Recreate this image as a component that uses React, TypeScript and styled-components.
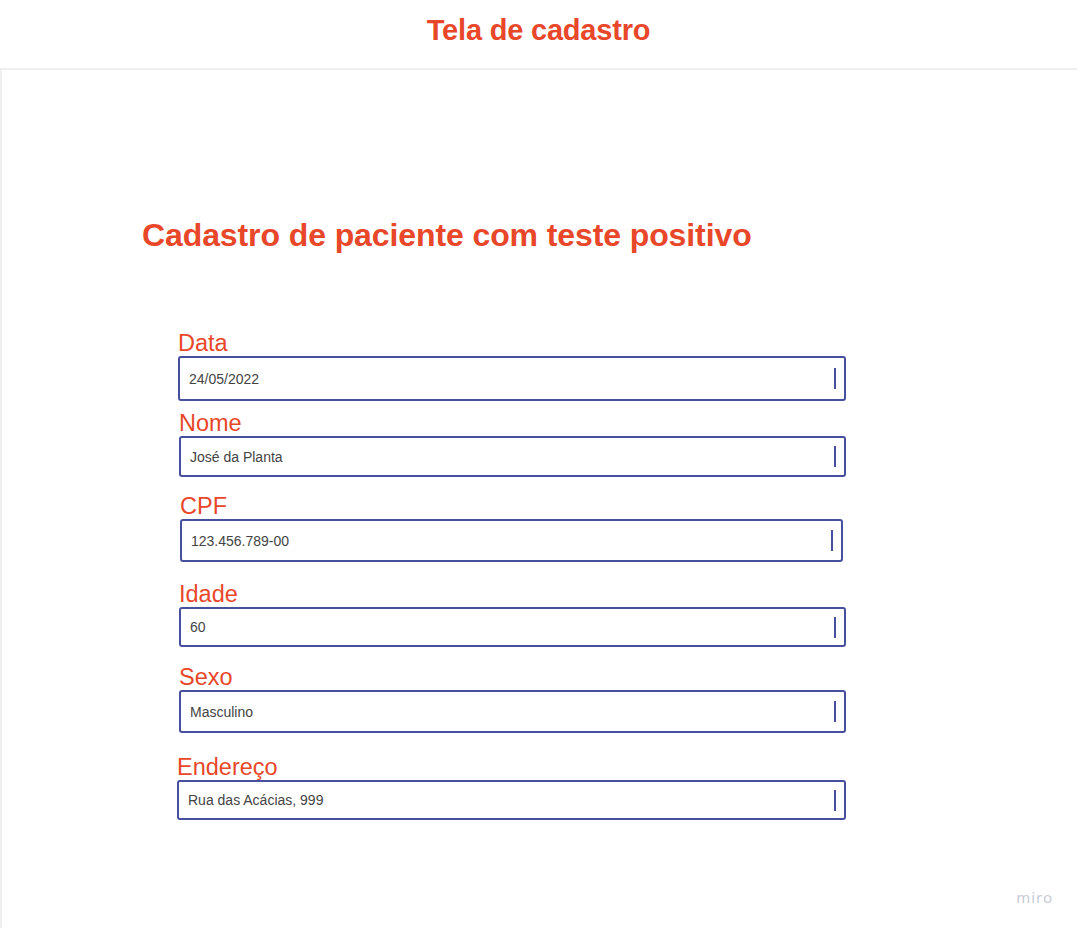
import React from "react";
import styled, { createGlobalStyle } from "styled-components";

const Global = createGlobalStyle`
  html, body { margin: 0; padding: 0; background: #ffffff; }
  body { font-family: "Liberation Sans", Arial, sans-serif; }
`;

const Page = styled.div`
  width: 1077px;
  height: 928px;
  display: flex;
  flex-direction: column;
  overflow: hidden;
  background: #fff;
`;

const TopBar = styled.header`
  flex: none;
  height: 70px;
  display: flex;
  justify-content: center;
  align-items: flex-start;
  border-bottom: 2px solid #efefef;
  box-sizing: border-box;
`;

const TopTitle = styled.h1`
  margin: 13px 0 0 0;
  font-size: 29px;
  line-height: 34px;
  font-weight: 700;
  color: #e8472a;
  letter-spacing: -0.2px;
`;

const Canvas = styled.main`
  flex: 1;
  border-left: 2px solid #efefef;
  position: relative;
  padding: 147px 0 0 140px;
`;

const Heading = styled.h2`
  margin: 0 0 78px 0;
  font-size: 32px;
  font-weight: 700;
  color: #e8472a;
  line-height: 36px;
  letter-spacing: -0.1px;
`;

const Form = styled.div`
  display: flex;
  flex-direction: column;
  width: 667px;
  margin-left: 36px;
`;

const Field = styled.div<{ $dx: number; $gap: number; $w: number }>`
  display: flex;
  flex-direction: column;
  margin-left: ${(p) => p.$dx}px;
  margin-bottom: ${(p) => p.$gap}px;
  width: ${(p) => p.$w}px;
`;

const Label = styled.label`
  font-size: 23.5px;
  color: #e8472a;
  line-height: 24px;
  margin-bottom: 1px;
`;

const Box = styled.div<{ $h: number }>`
  height: ${(p) => p.$h}px;
  box-sizing: border-box;
  border: 2px solid #46509e;
  border-radius: 3px;
  display: flex;
  align-items: center;
  justify-content: space-between;
  padding: 0 8px 0 9px;
  font-size: 14px;
  color: #444444;
`;

const Caret = styled.span`
  width: 2px;
  height: 21px;
  background: #46509e;
`;

const Watermark = styled.div`
  position: absolute;
  right: 24px;
  bottom: 21px;
  font-family: "Noto Sans", sans-serif;
  font-size: 15px;
  letter-spacing: 1px;
  color: #c9ccd6;
`;

const fields = [
  { label: "Data", value: "24/05/2022", dx: 0, h: 45, gap: 10, w: 668 },
  { label: "Nome", value: "José da Planta", dx: 1, h: 41, gap: 17, w: 667 },
  { label: "CPF", value: "123.456.789-00", dx: 2, h: 43, gap: 20, w: 663 },
  { label: "Idade", value: "60", dx: 1, h: 40, gap: 18, w: 667 },
  { label: "Sexo", value: "Masculino", dx: 1, h: 43, gap: 22, w: 667 },
  { label: "Endereço", value: "Rua das Acácias, 999", dx: -1, h: 40, gap: 0, w: 669 },
];

export default function App() {
  return (
    <Page>
      <Global />
      <TopBar>
        <TopTitle>Tela de cadastro</TopTitle>
      </TopBar>
      <Canvas>
        <Heading>Cadastro de paciente com teste positivo</Heading>
        <Form>
          {fields.map((f) => (
            <Field key={f.label} $dx={f.dx} $gap={f.gap} $w={f.w}>
              <Label>{f.label}</Label>
              <Box $h={f.h}>
                <span>{f.value}</span>
                <Caret />
              </Box>
            </Field>
          ))}
        </Form>
        <Watermark>miro</Watermark>
      </Canvas>
    </Page>
  );
}
